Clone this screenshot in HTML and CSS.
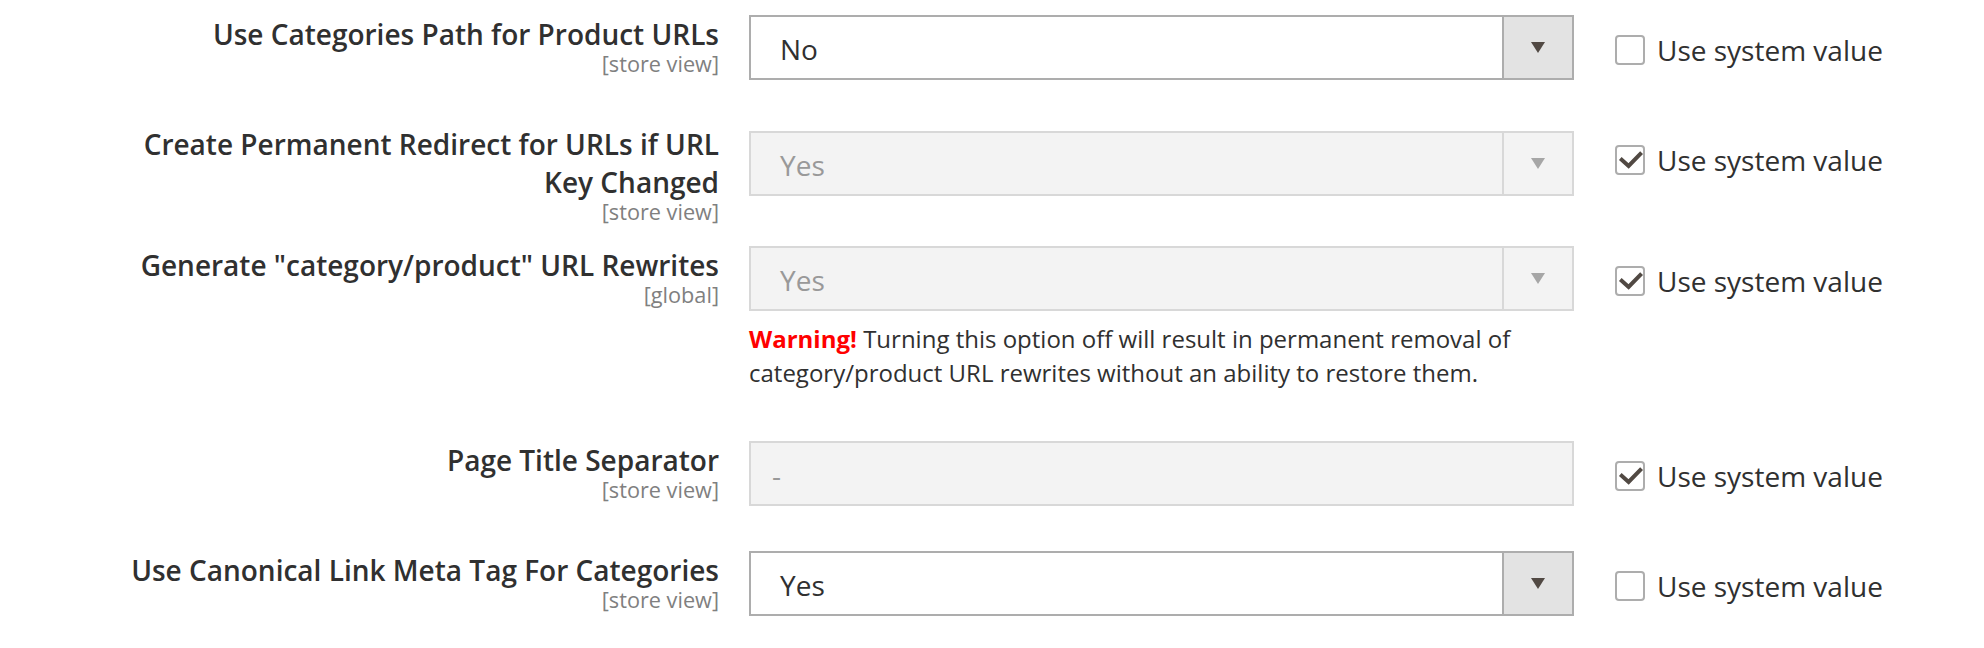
FILE: index.html
```html
<!DOCTYPE html>
<html lang="en">
<head>
    <meta charset="UTF-8">
    <meta name="viewport" content="width=device-width, initial-scale=1.0">
    <title>Search Engine Optimization</title>
    <link rel="stylesheet" href="styles.css">
</head>
<body>

    <div class="config">
        <div class="row">
            <div class="label">
                <span class="title">Use Categories Path for Product URLs</span>
                <span class="scope">[store view]</span>
            </div>
            <div class="value">
                <div class="select">
                    <span class="select-text">No</span>
                    <span class="select-btn"><span class="arrow"></span></span>
                </div>
            </div>
            <label class="use-default">
                <span class="checkbox"></span>
                Use system value
            </label>
        </div>

        <div class="row row-wrap">
            <div class="label">
                <span class="title">Create Permanent Redirect for URLs if URL Key Changed</span>
                <span class="scope">[store view]</span>
            </div>
            <div class="value">
                <div class="select disabled">
                    <span class="select-text">Yes</span>
                    <span class="select-btn"><span class="arrow"></span></span>
                </div>
            </div>
            <label class="use-default">
                <span class="checkbox checked">
                    <svg width="26" height="26" viewBox="0 0 26 26"><path d="M3.3 11.6 L11.6 19 L24.6 5.6" fill="none" stroke="#514943" stroke-width="4"/></svg>
                </span>
                Use system value
            </label>
        </div>

        <div class="row">
            <div class="label">
                <span class="title">Generate "category/product" URL Rewrites</span>
                <span class="scope">[global]</span>
            </div>
            <div class="value">
                <div class="select disabled">
                    <span class="select-text">Yes</span>
                    <span class="select-btn"><span class="arrow"></span></span>
                </div>
                <p class="note"><strong>Warning!</strong> Turning this option off will result in permanent removal of category/product URL rewrites without an ability to restore them.</p>
            </div>
            <label class="use-default">
                <span class="checkbox checked">
                    <svg width="26" height="26" viewBox="0 0 26 26"><path d="M3.3 11.6 L11.6 19 L24.6 5.6" fill="none" stroke="#514943" stroke-width="4"/></svg>
                </span>
                Use system value
            </label>
        </div>

        <div class="row">
            <div class="label">
                <span class="title">Page Title Separator</span>
                <span class="scope">[store view]</span>
            </div>
            <div class="value">
                <div class="input disabled">-</div>
            </div>
            <label class="use-default">
                <span class="checkbox checked">
                    <svg width="26" height="26" viewBox="0 0 26 26"><path d="M3.3 11.6 L11.6 19 L24.6 5.6" fill="none" stroke="#514943" stroke-width="4"/></svg>
                </span>
                Use system value
            </label>
        </div>

        <div class="row">
            <div class="label">
                <span class="title">Use Canonical Link Meta Tag For Categories</span>
                <span class="scope">[store view]</span>
            </div>
            <div class="value">
                <div class="select">
                    <span class="select-text">Yes</span>
                    <span class="select-btn"><span class="arrow"></span></span>
                </div>
            </div>
            <label class="use-default">
                <span class="checkbox"></span>
                Use system value
            </label>
        </div>
    </div>

</body>
</html>
```

FILE: styles.css
```css
body {
    margin: 0;
    padding-top: 15px;
    font-family: "Open Sans", sans-serif;
    color: #303030;
    background-color: #ffffff;
}
.row {
    display: flex;
    align-items: flex-start;
    padding-bottom: 45px;
}
.label {
    width: 604px;
    margin-left: 115px;
    text-align: right;
    flex-shrink: 0;
}
.title {
    display: block;
    font-size: 28px;
    font-weight: 600;
    line-height: 38px;
}
.scope {
    display: block;
    font-size: 21.7px;
    line-height: 22.5px;
    color: #808080;
    margin-bottom: -22.5px;
}
.value {
    width: 825px;
    margin-left: 30px;
    flex-shrink: 0;
}
.row-wrap .value {
    margin-top: 6px;
}
.select {
    display: flex;
    height: 65px;
    box-sizing: border-box;
    border: 2px solid #adadad;
    background-color: #ffffff;
}
.select-text {
    flex: 1;
    padding-left: 29px;
    padding-top: 3px;
    font-size: 28px;
    line-height: 58px;
}
.select-btn {
    width: 70px;
    box-sizing: border-box;
    border-left: 2px solid #adadad;
    background-color: #e3e3e3;
    display: flex;
    align-items: center;
    justify-content: center;
}
.arrow {
    width: 0;
    height: 0;
    border-left: 7px solid transparent;
    border-right: 7px solid transparent;
    border-top: 11px solid #514943;
}
.select.disabled {
    background-color: #f3f3f3;
    border-color: #d8d8d8;
}
.select.disabled .select-text {
    color: #999999;
}
.select.disabled .select-btn {
    background-color: transparent;
    border-left-color: #d8d8d8;
}
.select.disabled .arrow {
    border-top-color: #a6a6a6;
}
.input {
    height: 65px;
    box-sizing: border-box;
    border: 2px solid #adadad;
    padding-left: 21px;
    padding-top: 3px;
    font-size: 28px;
    line-height: 58px;
}
.input.disabled {
    background-color: #f3f3f3;
    border-color: #d8d8d8;
    color: #999999;
}
.note {
    margin: 11px 0 6px;
    font-size: 24px;
    line-height: 34px;
}
.note strong {
    color: #ff0000;
    font-weight: 700;
}
.use-default {
    display: flex;
    align-items: center;
    gap: 12px;
    margin-left: 41px;
    margin-top: 20px;
    font-size: 28px;
    line-height: 30px;
    white-space: nowrap;
}
.checkbox {
    width: 30px;
    height: 30px;
    box-sizing: border-box;
    border: 2px solid #adadad;
    border-radius: 4px;
    background-color: #ffffff;
}
.checkbox svg {
    display: block;
}
```
